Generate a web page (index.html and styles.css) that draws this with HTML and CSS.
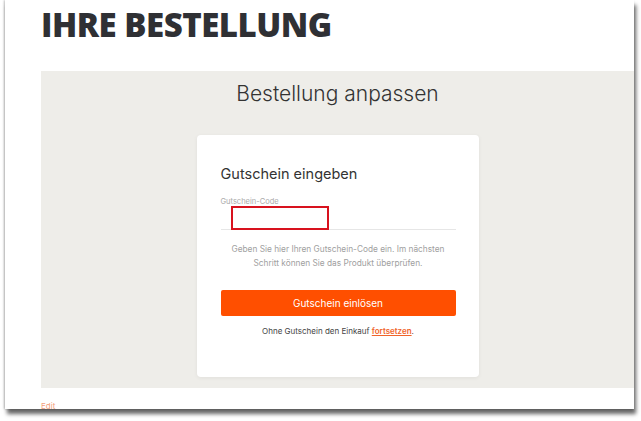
FILE: index.html
```html
<!DOCTYPE html>
<html lang="de">
<head>
    <meta charset="UTF-8">
    <title>Ihre Bestellung</title>
    <link rel="stylesheet" href="styles.css">
</head>
<body>
    <div class="window">
        <h1>IHRE BESTELLUNG</h1>
        <section class="adjust">
            <h2>Bestellung anpassen</h2>
            <div class="card">
                <h3>Gutschein eingeben</h3>
                <div class="field">
                    <label>Gutschein-Code</label>
                    <input type="text">
                    <span class="mark"></span>
                </div>
                <p class="hint">Geben Sie hier Ihren Gutschein-Code ein. Im nächsten Schritt können Sie das Produkt überprüfen.</p>
                <button class="redeem">Gutschein einlösen</button>
                <p class="skip">Ohne Gutschein den Einkauf <a href="#">fortsetzen</a>.</p>
            </div>
        </section>
        <a class="edit" href="#">Edit</a>
    </div>
</body>
</html>
```

FILE: styles.css
```css
body {
    margin: 0;
    padding-bottom: 12px;
    background: #fff;
    font-family: Inter, "Noto Sans", sans-serif;
}
.window {
    margin-left: 5px;
    width: 629px;
    height: 409px;
    background: #fff;
    padding-left: 36px;
    box-sizing: border-box;
    box-shadow: 2px 5px 4px rgba(0, 0, 0, 0.6), -1px 0 2px rgba(0, 0, 0, 0.25);
}
h1 {
    margin: 0;
    padding-top: 5px;
    height: 66px;
    font-family: "Open Sans", sans-serif;
    font-weight: 800;
    font-size: 33px;
    letter-spacing: -0.5px;
    color: #2f3034;
    line-height: 40px;
}
.adjust {
    background: #eeede9;
    height: 317px;
    padding-top: 10px;
    box-sizing: border-box;
    display: flex;
    flex-direction: column;
    align-items: center;
}
.adjust h2 {
    margin: 0;
    font-weight: 300;
    font-size: 21px;
    line-height: 26px;
    color: #333;
}
.card {
    margin-top: 28px;
    width: 282px;
    height: 242px;
    box-sizing: border-box;
    background: #fff;
    border-radius: 4px;
    box-shadow: 0 1px 4px rgba(0, 0, 0, 0.06);
    padding: 28px 23px 0 24px;
}
.card h3 {
    margin: 0;
    font-weight: 400;
    font-size: 14.5px;
    line-height: 22px;
    color: #333;
}
.field {
    position: relative;
    margin-top: 12px;
}
.field label {
    display: block;
    font-size: 7.5px;
    color: #aaa;
    line-height: 10px;
}
.field input {
    display: block;
    width: 100%;
    height: 22px;
    border: none;
    border-bottom: 1px solid #e6e6e6;
    padding: 0;
    outline: none;
}
.mark {
    position: absolute;
    left: 10px;
    top: 9px;
    width: 98px;
    height: 24px;
    border: 2px solid #d8121e;
    box-sizing: border-box;
}
.hint {
    margin: 12px 0 0;
    padding: 0 8px;
    text-align: center;
    font-size: 8.3px;
    line-height: 14px;
    color: #a0a0a0;
}
.redeem {
    display: block;
    width: 100%;
    margin-top: 20px;
    height: 26px;
    border: none;
    border-radius: 2px;
    background: #ff4f00;
    color: #fff;
    font-family: inherit;
    font-size: 10px;
}
.skip {
    margin: 10px 0 0;
    text-align: center;
    font-size: 8px;
    color: #444;
}
.skip a {
    color: #f0642a;
    font-weight: 600;
}
.edit {
    display: block;
    margin-top: 13px;
    font-size: 8px;
    line-height: 10px;
    color: #f4a07c;
    text-decoration: none;
}
```
